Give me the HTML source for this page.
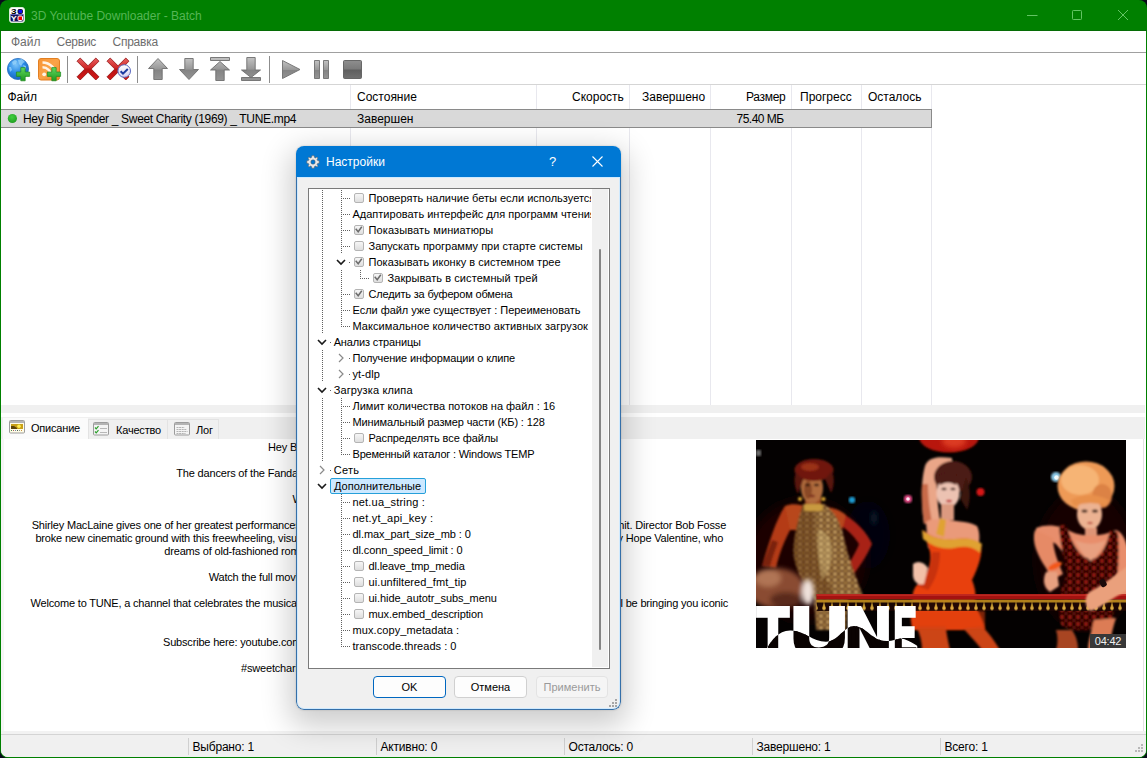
<!DOCTYPE html>
<html lang="ru">
<head>
<meta charset="utf-8">
<title>3D Youtube Downloader - Batch</title>
<style>
*{box-sizing:border-box;margin:0;padding:0}
html,body{width:1147px;height:758px;overflow:hidden;background:#080c1a}
body{font-family:"Liberation Sans",sans-serif;font-size:12px;color:#000;position:relative}
.abs{position:absolute}
#win{position:absolute;left:0;top:0;width:1147px;height:758px;background:#008000;border-radius:8px;overflow:hidden}
#title{position:absolute;left:31px;top:8.5px;font-size:12px;color:#55b655;white-space:nowrap;line-height:15px}
#client{position:absolute;left:1px;top:31px;width:1145px;height:726px;background:#fff;border-radius:0 0 7px 7px;overflow:hidden}
#menubar{position:absolute;left:0;top:0;width:1145px;height:21px;background:#fff}
#menubar span{position:absolute;top:4px;color:#6d6d6d;font-size:12px;line-height:15px;white-space:nowrap}
#menuline{position:absolute;left:0;top:21px;width:1145px;height:1px;background:#a0a0a0}
#toolbar{position:absolute;left:0;top:22px;width:1145px;height:31px;background:#fff}
#toolline{position:absolute;left:0;top:53px;width:1145px;height:1px;background:#d5d5d5}
.tsep{position:absolute;top:3px;width:1px;height:27px;background:#8d8d8d}
#list{position:absolute;left:0;top:54px;width:1145px;height:320px;background:#fff}
.hd{position:absolute;top:0;height:24px;line-height:25px;font-size:12px;white-space:nowrap}
.cdiv{position:absolute;top:0;width:1px;height:320px;background:#e8e8ee}
#row{position:absolute;left:0;top:24px;width:931px;height:19px;background:#d9d9d9;border-top:1px solid #8a8a8a;border-bottom:1px solid #8a8a8a;border-right:1px solid #8a8a8a}
#row span{position:absolute;top:0;line-height:19px;font-size:12px;white-space:nowrap}
#split{position:absolute;left:0;top:374px;width:1144px;height:8px;background:#f0f0f0}
#tabstrip{position:absolute;left:0;top:386px;width:1144px;height:22px;background:#f0f0f0}
.tab{position:absolute;top:2px;height:20px;border:1px solid #e3e3e3;border-bottom:none;background:#f0f0f0;font-size:11px;line-height:18px;white-space:nowrap}
.tab.act{top:0;height:22px;background:#fbfbfb;border-color:#f0f0f0}
.tab span{position:absolute;top:1px;letter-spacing:-0.2px}
#desc{position:absolute;left:0;top:408px;width:1143px;height:292px;background:#fff;border-left:3px solid #f6f6f6;border-right:1px solid #e3e3e3}
#below{position:absolute;left:0;top:700px;width:1145px;height:3px;background:#f2f2f2}
#status{position:absolute;left:0;top:703px;width:1145px;height:23px;background:#f0f0f0;border-top:1px solid #d4d4d4}
#status span{position:absolute;top:5px;font-size:12px;line-height:15px;white-space:nowrap;letter-spacing:-.2px}
#status i{position:absolute;top:3px;width:1px;height:17px;background:#d0d0d0}
#dtext{position:absolute;left:-4px;top:1px;width:760px;height:290px;overflow:hidden}
.dl{position:absolute;font-size:11px;line-height:13px;white-space:nowrap;letter-spacing:-0.18px;color:#000}

#dlg{position:absolute;left:296px;top:146px;width:325px;height:564px;background:#f0f0f0;border-radius:8px;overflow:hidden;box-shadow:0 10px 30px 6px rgba(0,0,0,.20),0 0 2px rgba(0,0,0,.2)}
#dtbg{position:absolute;left:0;top:0;width:325px;height:31px;background:#0078d4}
#dframe{position:absolute;left:0;top:31px;width:325px;height:533px;border:1px solid #356fa8;border-top:none;border-radius:0 0 8px 8px;box-shadow:inset 0 0 0 1px #cfeaff}
#dlgin{position:absolute;left:1px;top:1px;width:323px;height:562px}
#dtitle{position:absolute;left:0;top:0;width:323px;height:30px}
#dtitle span{position:absolute;color:#fff;font-size:12px;line-height:15px;white-space:nowrap}
#tree{position:absolute;left:11px;top:41px;width:302px;height:481px;background:#fff;border:1px solid #7a7a7a}
#treeclip{position:absolute;left:0;top:0;width:282px;height:479px;overflow:hidden}
#sb{position:absolute;left:283px;top:0;width:16px;height:478px;background:#f0f0f0}
#sb i{position:absolute;left:7px;top:60px;width:2px;height:401px;background:#858585;border-radius:1px}
.tt{position:absolute;font-size:11px;line-height:16px;white-space:nowrap;height:16px}
.tt.sel{background:#cce8ff;border:1px solid #26a0da;border-radius:2px;padding:0 0 0 3px;line-height:14px}
.cb{position:absolute;width:10px;height:10px;border:1px solid #b4b4b4;border-radius:2px;background:linear-gradient(#f6f6f6,#dedede)}
.chv{position:absolute}
.btn{position:absolute;top:529px;width:73px;height:22px;border:1px solid #d0d0d0;border-radius:4px;background:#fdfdfd;text-align:center;font-size:11px;line-height:20px}
.btn.def{border:1px solid #0067c0;box-shadow:inset 0 0 0 1px #fdfdfd}
.btn.dis{color:#9a9a9a;border-color:#e3e3e3;background:#f5f5f5}
</style>
</head>
<body>
<div id="win">
  <div id="title">3D Youtube Downloader - Batch</div>
  <svg class="abs" style="left:9px;top:7px" width="16" height="16" viewBox="0 0 16 16">
    <rect x=".5" y=".5" width="15" height="15" rx="2.500" fill="#fff" stroke="#d8ecd8" stroke-width="1"/>
    <path d="M1.500 7.500h13v5.500a1.500 1.500 0 0 1-1.500 1.500h-10a1.500 1.500 0 0 1-1.500-1.500z" fill="#14145a"/>
    <rect x="1.500" y="7" width="13" height="1" fill="#6a6ac0"/>
    <rect x="9" y="2.500" width="4.500" height="4" rx="1" fill="#0a0af0" stroke="#000" stroke-width=".8"/>
    <rect x="9" y="9" width="4.500" height="4.500" rx="1" fill="#f00000" stroke="#fff" stroke-width="1"/>
    <text x="2" y="7.200" font-family="'Liberation Sans',sans-serif" font-weight="bold" font-size="7.500" fill="#000" textLength="5.500" lengthAdjust="spacingAndGlyphs">3</text>
    <text x="1.800" y="14" font-family="'Liberation Sans',sans-serif" font-weight="bold" font-size="7.500" fill="#fff" textLength="6" lengthAdjust="spacingAndGlyphs">Y</text>
  </svg>
  <svg class="abs" style="left:1020px;top:5px" width="120" height="20" viewBox="1020 5 120 20" fill="none" stroke="#63c463" stroke-width="1">
    <path d="M1027 15.500h10.500"/>
    <rect x="1072.500" y="10.500" width="9" height="9" rx=".800"/>
    <path d="M1118 10 1128 20M1128 10 1118 20"/>
  </svg>

  <div class="abs" style="left:0;top:30px;width:1147px;height:1px;background:#066c06"></div>
  <div id="client">
    <div id="menubar"><span style="left:10px">Файл</span><span style="left:55.5px;letter-spacing:-.25px">Сервис</span><span style="left:111.5px;letter-spacing:-.25px">Справка</span></div>
    <div id="menuline"></div>
    <div id="toolbar">
<svg class="abs" style="left:-1px;top:0" width="400" height="31" viewBox="0 53 400 31">
<defs>
<radialGradient id="gl" cx=".4" cy=".3" r=".75"><stop offset="0" stop-color="#7cc4f8"/><stop offset=".5" stop-color="#2a8ae6"/><stop offset="1" stop-color="#1560b8"/></radialGradient>
<linearGradient id="gp" x1="0" y1="0" x2="0" y2="1"><stop offset="0" stop-color="#5fd65f"/><stop offset="1" stop-color="#1e9a1e"/></linearGradient>
<linearGradient id="go" x1="0" y1="0" x2="1" y2="1"><stop offset="0" stop-color="#f79434"/><stop offset=".5" stop-color="#fba348"/><stop offset="1" stop-color="#ef8a26"/></linearGradient>
<linearGradient id="gr" x1="0" y1="0" x2="0" y2="1"><stop offset="0" stop-color="#e86060"/><stop offset=".45" stop-color="#d02828"/><stop offset=".5" stop-color="#b81414"/><stop offset="1" stop-color="#d41818"/></linearGradient>
<linearGradient id="gg" x1="0" y1="0" x2="0" y2="1"><stop offset="0" stop-color="#c2c2c2"/><stop offset=".5" stop-color="#989898"/><stop offset=".55" stop-color="#848484"/><stop offset="1" stop-color="#949494"/></linearGradient>
<linearGradient id="gs" x1="0" y1="0" x2="0" y2="1"><stop offset="0" stop-color="#8e8e8e"/><stop offset=".48" stop-color="#7a7a7a"/><stop offset=".52" stop-color="#5e5e5e"/><stop offset="1" stop-color="#707070"/></linearGradient>
<linearGradient id="gb" x1="0" y1="0" x2="0" y2="1"><stop offset="0" stop-color="#ffffff"/><stop offset="1" stop-color="#d4d0f0"/></linearGradient>
<path id="plus" d="M-2.2-6.6h4.4v4.4h4.4v4.4h-4.4v4.4h-4.4v-4.4h-4.4v-4.4h4.4z"/>
<path id="rx" d="M-11-7.8-7.8-11 0-3.2 7.8-11 11-7.8 3.2 0 11 7.8 7.8 11 0 3.2-7.8 11-11 7.8-3.200 0z"/>
</defs>
<!-- globe -->
<circle cx="18" cy="69" r="10.6" fill="url(#gl)" stroke="#2a6fc0" stroke-width=".8"/>
<path d="M12 62l3-2 2 1-1 3-3 1zM18 60l4-1 3 3-2 1-2 3-2-2zM9 67l2 0 1 3-2 2zM23 65l3 1 0 3-2-1z" fill="#9ad4fa" opacity=".75"/>
<use href="#plus" x="23" y="74.200" fill="url(#gp)" stroke="#1f8a1f" stroke-width=".7"/>
<!-- rss -->
<rect x="38.500" y="58.500" width="21" height="21.500" rx="2.500" fill="url(#go)" stroke="#e27f22" stroke-width="1"/>
<g fill="none" stroke="#fff3e4" stroke-linecap="butt"><path d="M42.500 62.500a13.500 13.500 0 0 1 13.500 13.500" stroke-width="2.600"/><path d="M42.500 67.300a8.700 8.700 0 0 1 8.700 8.700" stroke-width="2.400"/></g>
<circle cx="44.200" cy="74.300" r="1.900" fill="#fff3e4"/>
<use href="#plus" x="54" y="74.200" fill="url(#gp)" stroke="#1f8a1f" stroke-width=".7"/>
<!-- red X -->
<use href="#rx" x="88" y="69" fill="url(#gr)" stroke="#8e1212" stroke-width=".8"/>
<use href="#rx" x="118" y="69" fill="url(#gr)" stroke="#8e1212" stroke-width=".8"/>
<circle cx="124.200" cy="71" r="6.300" fill="url(#gb)" stroke="#5a68c0" stroke-width="1"/>
<path d="M120.600 71.200 123 73.600 127.800 69" fill="none" stroke="#1c3aa0" stroke-width="2"/>
<!-- arrows -->
<g fill="url(#gg)" stroke="#6e6e6e" stroke-width=".9" stroke-linejoin="round">
<path d="M158 58.500 167.500 68.500H162.200V79.500H153.800V68.500H148.500z"/>
<path d="M189 79.500 179.500 69.500H184.800V58.500H193.200V69.500H198.500z"/>
<path d="M210.500 57.500H229.500V60.500H210.500zM220 61.500 229.500 70H224.200V80.500H215.800V70H210.500z"/>
<path d="M251 77.500 241.500 70H246.800V57.500H255.200V70H260.500zM241.500 77.500H260.500V80.500H241.500z"/>
<path d="M282.500 60.500 300 69.500 282.500 78.500z"/>
<path d="M314.500 60.500H319.500V78.500H314.500zM323.500 60.500H328.500V78.500H323.500z"/>
</g>
<rect x="343.500" y="60.500" width="18" height="18" rx="1" fill="url(#gs)" stroke="#5c5c5c" stroke-width=".9"/>
</svg>

      <div class="tsep" style="left:66px"></div>
      <div class="tsep" style="left:136px"></div>
      <div class="tsep" style="left:268px"></div>
    </div>
    <div id="toolline"></div>
    <div id="list">
      <div class="cdiv" style="left:349px"></div>
      <div class="cdiv" style="left:535px"></div>
      <div class="cdiv" style="left:628px"></div>
      <div class="cdiv" style="left:709px"></div>
      <div class="cdiv" style="left:790px"></div>
      <div class="cdiv" style="left:860px"></div>
      <div class="cdiv" style="left:930px"></div>
      <div class="hd" style="left:6.5px">Файл</div>
      <div class="hd" style="left:356px">Состояние</div>
      <div class="hd" style="left:571px">Скорость</div>
      <div class="hd" style="left:641px">Завершено</div>
      <div class="hd" style="left:745px;letter-spacing:-.3px">Размер</div>
      <div class="hd" style="left:799px">Прогресс</div>
      <div class="hd" style="left:867px">Осталось</div>
      <div id="row">
        <svg class="abs" style="left:6px;top:3px" width="11" height="11" viewBox="0 0 11 11"><defs><radialGradient id="gd" cx=".45" cy=".35" r=".7"><stop offset="0" stop-color="#3fd03f"/><stop offset="1" stop-color="#1f9a1f"/></radialGradient></defs><circle cx="5.400" cy="5.500" r="4.600" fill="url(#gd)"/></svg>
        <span style="left:22px;letter-spacing:-0.33px">Hey Big Spender _ Sweet Charity (1969) _ TUNE.mp4</span>
        <span style="left:356px">Завершен</span>
        <span style="left:735.5px;letter-spacing:-.5px">75.40 МБ</span>
      </div>
    </div>
    <div id="split"></div>
    <div id="tabstrip">
      <div class="tab act" style="left:1px;width:87px"><svg class="abs" style="left:6px;top:2px" width="16" height="14" viewBox="0 0 16 14"><rect x=".5" y=".5" width="15" height="12.500" rx="1" fill="#fffce6" stroke="#9c9c9c"/><rect x="1" y="1" width="14" height="2" fill="#b4b4b4"/><rect x="2" y="4" width="12" height="5" fill="#c8a018"/><path d="M2 6l3 0 3 2 0 1-6 0z" fill="#5a4208"/><circle cx="10" cy="6.300" r="1.800" fill="#ffee50"/><g><rect x="2" y="10" width="1" height="1" fill="#4a8a4a"/><rect x="4" y="10" width="1" height="1" fill="#a86060"/><rect x="6" y="10" width="1" height="1" fill="#7088b0"/><rect x="8" y="10" width="1" height="1" fill="#506050"/><rect x="10" y="10" width="1" height="1" fill="#8a9a8a"/><rect x="12" y="10" width="1" height="1" fill="#c89040"/></g></svg><span style="left:28px;top:1px">Описание</span></div>
      <div class="tab" style="left:87px;width:80px"><svg class="abs" style="left:4px;top:2px" width="16" height="14" viewBox="0 0 16 14"><rect x=".5" y=".5" width="15" height="12.500" rx="1" fill="#f4f4f4" stroke="#9c9c9c"/><rect x="1" y="1" width="14" height="2" fill="#b4b4b4"/><path d="M2 5.500l1.200 1.300 2.300-2.600M2 9.500l1.200 1.300 2.300-2.600" fill="none" stroke="#2aa02a" stroke-width="1.200"/><path d="M7 6.500h7M7 10.500h7" stroke="#b8b8b8" stroke-width="1"/></svg><span style="left:27px">Качество</span></div>
      <div class="tab" style="left:166px;width:52px"><svg class="abs" style="left:6px;top:2px" width="16" height="14" viewBox="0 0 16 14"><rect x=".5" y=".5" width="15" height="12.500" rx="1" fill="#f4f4f4" stroke="#9c9c9c"/><rect x="1" y="1" width="14" height="2" fill="#b4b4b4"/><path d="M2.500 5.500h8M2.500 7.500h10M2.500 9.500h11M2.500 11.500h9" stroke="#b4b4b4" stroke-width="1" stroke-dasharray="2 .6"/></svg><span style="left:28px">Лог</span></div>
    </div>
    <div id="desc">
<div id="dtext">
<span class="dl" style="left:268.1px;top:1px">Hey Big Spender | Sweet Charity (1969) | TUNE</span>
<span class="dl" style="left:176.3px;top:27px">The dancers of the Fandango Ballroom perform 'Big Spender' in Bob Fosse's musical.</span>
<span class="dl" style="left:292.5px;top:53px">Watch the full scene now.</span>
<span class="dl" style="left:31.7px;top:79px">Shirley MacLaine gives one of her greatest performances in this adaptation of the</span>
<span class="dl" style="left:35.4px;top:92px">broke new cinematic ground with this freewheeling, visually inventive story of</span>
<span class="dl" style="left:164.3px;top:105px">dreams of old-fashioned romance but keeps getting her heart broken.</span>
<span class="dl" style="left:208.7px;top:131px">Watch the full movie on digital platforms today.</span>
<span class="dl" style="left:30.5px;top:157px">Welcome to TUNE, a channel that celebrates the musicals you love, where</span>
<span class="dl" style="left:309.5px;top:170px">moments from the greatest movie musicals.</span>
<span class="dl" style="left:163.0px;top:196px">Subscribe here: youtube.com/@TUNEmusicals?sub_confirmation=1</span>
<span class="dl" style="left:241.0px;top:222px">#sweetcharity #shirleymaclaine #bobfosse</span>
<span class="dl" style="right:33.9px;top:79px">Broadway hit. Director Bob Fosse</span>
<span class="dl" style="right:36.9px;top:92px">Charity Hope Valentine, who</span>
<span class="dl" style="right:31.9px;top:157px">we'll be bringing you iconic</span>
</div>
</div>
    <svg id="thumb" class="abs" style="left:755px;top:409px" width="370" height="208" viewBox="0 0 370 208">
<defs>
<filter id="b1" x="-10%" y="-10%" width="120%" height="120%"><feGaussianBlur stdDeviation="1"/></filter>
<filter id="b2" x="-30%" y="-30%" width="160%" height="160%"><feGaussianBlur stdDeviation="2.5"/></filter>
<filter id="b4" x="-30%" y="-30%" width="160%" height="160%"><feGaussianBlur stdDeviation="6"/></filter>
<pattern id="coins" width="7" height="6" patternUnits="userSpaceOnUse"><rect width="7" height="6" fill="#76502a"/><circle cx="2" cy="2" r="1.700" fill="#caa466"/><circle cx="5.500" cy="5" r="1.500" fill="#a88044"/></pattern>
<pattern id="seq" width="8" height="7" patternUnits="userSpaceOnUse"><rect width="8" height="7" fill="#1a0504"/><circle cx="2" cy="2" r="1.900" fill="#a42410"/><circle cx="6" cy="5.500" r="1.600" fill="#70140a"/></pattern>
<pattern id="fringe" y="159.500" width="8" height="12" patternUnits="userSpaceOnUse"><rect width="8" height="12" fill="#1a0503"/><rect width="8" height="3" fill="#b8861c"/><path d="M4 2 2.200 9h3.600z" fill="#c89a30"/><circle cx="4" cy="9" r="1.700" fill="#e2b244"/></pattern>
<clipPath id="tc"><rect width="370" height="208"/></clipPath>
<clipPath id="wv"><path d="M11 208C16 200 22 191 34 190.500C48 190 56 201.700 70 201.700C82 201.700 88 186 98 186C110 186 116 201 130 201C140 201 142 197 148 199C154 201 158 204 161.500 206V208z"/></clipPath>
</defs>
<g clip-path="url(#tc)">
<rect width="370" height="208" fill="#040101"/>
<ellipse cx="112" cy="95" rx="22" ry="34" fill="#06060b" filter="url(#b4)"/>
<ellipse cx="50" cy="120" rx="60" ry="60" fill="#1c0604" filter="url(#b4)"/>
<ellipse cx="330" cy="120" rx="50" ry="70" fill="#160403" filter="url(#b4)"/>
<rect x="0" y="10" width="5" height="6" fill="#6a6a6a" filter="url(#b1)"/>
<!-- top red lamp -->
<ellipse cx="193" cy="-3" rx="30" ry="15.500" fill="#b81808" filter="url(#b1)"/>
<ellipse cx="198" cy="1" rx="12" ry="7" fill="#dc3a20" filter="url(#b2)"/>
<!-- lights -->
<circle cx="96" cy="60" r="3.200" fill="#1c9ad0" filter="url(#b1)"/>
<circle cx="152" cy="59" r="4" fill="#e84c88" filter="url(#b1)"/>
<circle cx="152" cy="59" r="1.800" fill="#ffe6f2"/>
<circle cx="224.500" cy="52" r="4" fill="#d81414" filter="url(#b1)"/>
<circle cx="300" cy="37" r="5" fill="#8cc8e6" filter="url(#b1)"/>
<circle cx="300.500" cy="37.500" r="2.300" fill="#f2fcff"/>
<ellipse cx="118" cy="78" rx="3" ry="7" fill="#0a1a2a" filter="url(#b2)"/>
<!-- LEFT dancer -->
<g filter="url(#b1)">
<path d="M29 66C20 80 13 102 6 126L20 128C24 110 32 92 40 80z" fill="#b43a16"/>
<path d="M16 100C12 110 9 118 6 126L14 127C16 118 20 108 22 102z" fill="#7a2410"/>
<path d="M84 72C100 80 112 94 116 104C110 118 102 128 98 134L91 128C96 118 102 108 103 104C98 96 90 88 82 84z" fill="#a82414"/>
<path d="M29 66C38 62 46 66 52 66H66C74 68 82 68 90 75L86 90H34z" fill="#b8461c"/>
<path d="M49 56h16v14h-16z" fill="#9a4a20"/>
<ellipse cx="56" cy="48" rx="11" ry="15.500" fill="#b06c3c"/>
<ellipse cx="52" cy="50" rx="4" ry="9" fill="#8a4a26"/>
<ellipse cx="58" cy="30" rx="19.500" ry="11" fill="#70190e"/>
<ellipse cx="54" cy="27" rx="9" ry="4" fill="#9a3018"/>
<path d="M40 32c-3 8-1 16 2 22l5-14zM76 31c3 8 2 16-1 22l-6-14z" fill="#58120a"/>
<path d="M47 64C42 80 36 100 38 118C42 136 50 150 58 158L60 190H90L92 158H108C102 142 94 124 90 106C86 90 84 76 68 64z" fill="url(#coins)"/>
<path d="M47 64C42 80 36 100 38 118C42 136 50 150 58 158H80C64 130 56 100 60 64z" fill="#5a3010" opacity=".45"/>
<path d="M62 90c8 0 14 10 14 22s-4 22-10 28c-4-16-6-34-4-50z" fill="#e8d090" opacity=".35"/>
<ellipse cx="51.500" cy="45" rx="2.600" ry="1.300" fill="#2a100a"/><ellipse cx="60.500" cy="45" rx="2.600" ry="1.300" fill="#2a100a"/><ellipse cx="56" cy="56" rx="3" ry="1.300" fill="#7a2a1c"/><circle cx="44" cy="59" r="2" fill="#e8b030"/><circle cx="67.500" cy="59" r="2" fill="#e8b030"/>
<rect x="48" y="64" width="19" height="7" rx="2" fill="#c89a40"/>
</g>
<!-- foreground blurry hand bottom-left -->
<g filter="url(#b2)">
<ellipse cx="20" cy="148" rx="28" ry="20" fill="#8a4c32"/>
<ellipse cx="12" cy="138" rx="13" ry="9" fill="#b07454"/>
<ellipse cx="30" cy="160" rx="16" ry="8" fill="#5a2c1c"/>
<ellipse cx="52" cy="152" rx="6" ry="13" fill="#f0e2dc"/>
</g>
<!-- MIDDLE dancer -->
<g filter="url(#b1)">
<path d="M168 84C165 64 165 40 169 26C172 18 180 16 196 18L196 25C188 25 182 27 181 33C180 50 182 66 184 80z" fill="#eaa688"/>
<path d="M168 84C166 70 165 56 166 44L172 44C172 58 174 72 176 82z" fill="#c86a4a"/>
<ellipse cx="197" cy="37" rx="19" ry="16" fill="#4c1a12"/>
<path d="M210 38c5 10 5 22 1 32l-7-12z" fill="#3a120c"/>
<ellipse cx="192" cy="53" rx="11.500" ry="15" fill="#ecc2b2"/>
<path d="M182 36q9-7 20 0l-2 9q-8-5-16 0z" fill="#4c1a12"/>
<ellipse cx="188" cy="49" rx="2.600" ry="1.200" fill="#3a1a14"/><ellipse cx="197" cy="49" rx="2.600" ry="1.200" fill="#3a1a14"/><ellipse cx="193" cy="61" rx="3" ry="1.300" fill="#c02828"/>
<path d="M185 64h13v16h-13z" fill="#dc9a80"/>
<path d="M170 82C178 76 184 82 190 79C198 82 210 80 221 86C224 92 224 100 222 108H172z" fill="#ea9a7a"/>
<path d="M167 90C176 98 186 100 198 99C210 98 218 98 225 104C227 114 222 128 216 140C220 150 220 156 219 166C224 174 228 182 229 190H157C154 182 154 172 157 164C156 158 156 152 160 146C170 138 176 126 174 112z" fill="#e8400e"/>
<path d="M176 112C176 126 172 138 162 146L172 150C180 140 184 126 184 112z" fill="#c8300a"/>
<path d="M166 90C176 98 186 100 198 99C210 98 218 98 226 104L224 113C216 106 208 106 198 108C186 110 176 106 167 99z" fill="#e0a232"/>
<path d="M184 78L180 94L188 97L190 80z" fill="#e0a232"/>
<path d="M157 124C162 120 168 122 172 128L168 144C162 146 158 142 157 136z" fill="#f2c0a8"/>
<path d="M160 186C164 194 166 202 166 210H194C192 200 190 192 190 186zM207 188C214 196 222 204 226 210H244C238 200 232 192 226 186z" fill="#cc4418"/>
</g>
<!-- RIGHT dancer -->
<g filter="url(#b1)">
<ellipse cx="330" cy="46" rx="28.500" ry="24.500" fill="#ee9a56"/>
<ellipse cx="324" cy="40" rx="19" ry="15" fill="#f6b474"/>
<ellipse cx="346" cy="56" rx="10" ry="12" fill="#dc8244"/>
<ellipse cx="333.500" cy="74" rx="12.500" ry="16" fill="#ecb292"/>
<path d="M315 60q18-10 38 0l-3 6q-15-6-32 0z" fill="#e8904c"/>
<ellipse cx="328.500" cy="71" rx="3" ry="1.500" fill="#3a2018"/><ellipse cx="339" cy="71" rx="3" ry="1.500" fill="#3a2018"/><ellipse cx="334" cy="83" rx="2.800" ry="1.200" fill="#c05a48"/><path d="M329 88h12v14h-12z" fill="#de9476"/>
<path d="M280 88C292 83 306 86 316 92C326 97 346 97 360 90C366 92 370 100 372 110V160H356L352 120L310 116L300 104C294 100 286 97 280 97z" fill="#e88e6c"/>
<path d="M279 90C275 102 282 116 290 128L296 140L307 134C302 122 297 110 297 98z" fill="#e68a66"/>
<path d="M303 86L311 84C314 100 322 116 335 121C347 116 352 102 354 90L362 92C364 120 361 150 357 178C350 190 320 194 306 186C300 172 304 150 311 134C307 118 304 100 303 86z" fill="url(#seq)"/>
<path d="M319 100C325 112 330 118 335 121C341 116 346 108 350 100C340 105 330 105 319 100z" fill="#e8a080"/>
<ellipse cx="299" cy="126" rx="7.500" ry="3" fill="#f2581c" transform="rotate(-25 299 126)"/>
<path d="M290 132c-4 8-2 16 4 20l9-6-2-14z" fill="#e8a080"/>
<path d="M338 180C336 190 332 200 332 210H354C354 198 357 188 360 178z" fill="#dc7c54"/>
<path d="M300 190c2 6 2 14 0 20h22c0-8-2-14-6-20z" fill="#a84424"/>
</g>
<!-- rail -->
<rect x="60.500" y="154.300" width="310" height="5.200" fill="#a41210"/>
<rect x="60.500" y="154.300" width="310" height="1.500" fill="#c42c24"/>
<rect x="60.500" y="159.500" width="310" height="11.500" fill="url(#fringe)" opacity=".95"/>
<path d="M157 171h72l0 18h-72z" fill="#e0400e" opacity=".55" filter="url(#b1)"/>
<!-- forearm over rail (right dancer) -->
<path d="M372 126C360 134 346 146 335 151C328 155 328 166 334 171C344 169 352 160 372 150z" fill="#eaa07c" filter="url(#b1)"/>
<rect x="344" y="139" width="6" height="8" rx="2" fill="#1a0a0a" transform="rotate(-30 347 143)"/>
<!-- TUNE logo -->
<g font-family="'Liberation Sans',sans-serif" font-weight="bold" font-size="70" fill="#fff" stroke="#fff" stroke-width="4" stroke-linejoin="miter">
<text x=".900" y="217.200" textLength="31.900" lengthAdjust="spacingAndGlyphs">T</text>
<text x="34.900" y="217.200" textLength="56.500" lengthAdjust="spacingAndGlyphs">U</text>
<text x="89.140" y="217.200" textLength="46.130" lengthAdjust="spacingAndGlyphs">N</text>
<text x="137.460" y="217.200" textLength="23.200" lengthAdjust="spacingAndGlyphs">E</text>
</g>
<g clip-path="url(#wv)">
<rect x="0" y="180" width="161.500" height="30" fill="#fff"/>
<g font-family="'Liberation Sans',sans-serif" font-weight="bold" font-size="70" fill="#0a0302" stroke="#0a0302" stroke-width="4" stroke-linejoin="miter">
<text x=".900" y="217.200" textLength="31.900" lengthAdjust="spacingAndGlyphs">T</text>
<text x="34.900" y="217.200" textLength="56.500" lengthAdjust="spacingAndGlyphs">U</text>
<text x="89.140" y="217.200" textLength="46.130" lengthAdjust="spacingAndGlyphs">N</text>
<text x="137.460" y="217.200" textLength="23.200" lengthAdjust="spacingAndGlyphs">E</text>
</g>
</g>
<!-- time badge -->
<rect x="334" y="194" width="36" height="14" fill="#383838"/>
<text x="352" y="205" text-anchor="middle" font-family="'Liberation Sans',sans-serif" font-size="11" fill="#f0f0f0" letter-spacing="-.2">04:42</text>
</g>
</svg>
<div id="below"></div>
    <div id="status">
      <i style="left:187px"></i><span style="left:191.5px">Выбрано: 1</span>
      <i style="left:375px"></i><span style="left:379.5px">Активно: 0</span>
      <i style="left:563px"></i><span style="left:567.5px">Осталось: 0</span>
      <i style="left:751px"></i><span style="left:755.5px">Завершено: 1</span>
      <i style="left:939px"></i><span style="left:943.5px">Всего: 1</span><svg class="abs" style="left:1131px;top:9px" width="12" height="12" shape-rendering="crispEdges"><path fill="#b8b8b8" d="M9 0h2v2h-2zM6 3h2v2h-2zM9 3h2v2h-2zM3 6h2v2h-2zM6 6h2v2h-2zM9 6h2v2h-2z"/></svg>
    </div>
  </div>
</div>
<div id="dlg"><div id="dtbg"></div><div id="dframe"></div><div id="dlgin">
  <div id="dtitle">
    <svg class="abs" style="left:9px;top:8px" width="14" height="14" viewBox="0 0 14 14"><g fill="#e8e8e8" stroke="#555" stroke-width=".5"><path d="M7 .6 8.2 .8 8.5 2.4 9.6 2.9 10.9 2 11.9 3 11.1 4.4 11.6 5.5 13.2 5.8 13.2 8.2 11.6 8.5 11.1 9.6 12 10.9 11 11.9 9.6 11.1 8.5 11.6 8.2 13.2 5.8 13.2 5.5 11.6 4.4 11.1 3.1 12 2.1 11 2.9 9.6 2.4 8.5 .8 8.2 .8 5.8 2.4 5.5 2.9 4.4 2 3.1 3 2.1 4.4 2.9 5.5 2.4 5.8 .8Z"/><circle cx="7" cy="7" r="2.2" fill="#0078d4"/></g></svg>
    <span style="left:29px;top:8px">Настройки</span>
    <span style="left:252px;top:7px;font-size:13px">?</span>
    <svg class="abs" style="left:295px;top:9px" width="11" height="11" viewBox="0 0 11 11"><path d="M.5 .5 10.5 10.5M10.5 .5 .5 10.5" stroke="#fff" stroke-width="1.1" fill="none"/></svg>
  </div>
  <div id="tree">
    <div id="treeclip">
<svg class="abs" style="left:0;top:0" width="283" height="479" shape-rendering="crispEdges"><path fill="none" stroke="#606060" stroke-width="1" stroke-dasharray="1 1" d="M13.5 1V145M13.5 161V193M13.5 209V273M32.5 1V64M32.5 81V138M51.5 81V90M32.5 209V266M32.5 305V458M34 9.5H42M34 25.5H42M34 41.5H42M34 57.5H42M34 105.5H42M34 121.5H42M34 137.5H42M34 217.5H42M34 233.5H42M34 249.5H42M34 265.5H42M34 313.5H42M34 329.5H42M34 345.5H42M34 361.5H42M34 377.5H42M34 393.5H42M34 409.5H42M34 425.5H42M34 441.5H42M34 457.5H42M53 89.5H61M40 73.5h1M21 153.5h1M40 169.5h1M40 185.5h1M21 201.5h1M21 281.5h1"/></svg>

<i class="cb" style="left:45px;top:4px"></i>
<span class="tt" style="left:59.5px;top:1px">Проверять наличие беты если используется yt-dlp</span>
<span class="tt" style="left:43.5px;top:17px">Адаптировать интерфейс для программ чтения с экрана</span>
<i class="cb on" style="left:45px;top:36px"><svg class="abs" style="left:0;top:0" width="8" height="8" viewBox="0 0 8 8"><path d="M.7 2.800 3.200 5.800 6.800 .800" fill="none" stroke="#6c6c6c" stroke-width="1.500"/></svg></i>
<span class="tt" style="left:59.5px;top:33px;letter-spacing:0.116px">Показывать миниатюры</span>
<i class="cb" style="left:45px;top:52px"></i>
<span class="tt" style="left:59.5px;top:49px;letter-spacing:0.003px">Запускать программу при старте системы</span>
<i class="cb on" style="left:45px;top:68px"><svg class="abs" style="left:0;top:0" width="8" height="8" viewBox="0 0 8 8"><path d="M.7 2.800 3.200 5.800 6.800 .800" fill="none" stroke="#6c6c6c" stroke-width="1.500"/></svg></i>
<span class="tt" style="left:59.5px;top:65px;letter-spacing:0.030px">Показывать иконку в системном трее</span>
<svg class="chv" style="left:26.600000000000023px;top:69px" width="10" height="8" viewBox="0 0 10 8"><path d="M1 2 L5 6 L9 2" fill="none" stroke="#1a1a1a" stroke-width="1.6"/></svg>
<i class="cb on" style="left:64px;top:84px"><svg class="abs" style="left:0;top:0" width="8" height="8" viewBox="0 0 8 8"><path d="M.7 2.800 3.200 5.800 6.800 .800" fill="none" stroke="#6c6c6c" stroke-width="1.500"/></svg></i>
<span class="tt" style="left:78.5px;top:81px;letter-spacing:0.072px">Закрывать в системный трей</span>
<i class="cb on" style="left:45px;top:100px"><svg class="abs" style="left:0;top:0" width="8" height="8" viewBox="0 0 8 8"><path d="M.7 2.800 3.200 5.800 6.800 .800" fill="none" stroke="#6c6c6c" stroke-width="1.500"/></svg></i>
<span class="tt" style="left:59.5px;top:97px;letter-spacing:-0.175px">Следить за буфером обмена</span>
<span class="tt" style="left:43.5px;top:113px;letter-spacing:-0.038px">Если файл уже существует : Переименовать</span>
<span class="tt" style="left:43.5px;top:129px;letter-spacing:0.06px">Максимальное количество активных загрузок<span style="margin-left:2px"> : 5</span></span>
<span class="tt" style="left:24.7px;top:145px;letter-spacing:-0.150px">Анализ страницы</span>
<svg class="chv" style="left:7.5px;top:149px" width="10" height="8" viewBox="0 0 10 8"><path d="M1 2 L5 6 L9 2" fill="none" stroke="#1a1a1a" stroke-width="1.6"/></svg>
<span class="tt" style="left:43.5px;top:161px;letter-spacing:-0.144px">Получение информации о клипе</span>
<svg class="chv" style="left:27.600000000000023px;top:164px" width="8" height="10" viewBox="0 0 8 10"><path d="M2 1 L6 5 L2 9" fill="none" stroke="#8a8a8a" stroke-width="1.2"/></svg>
<span class="tt" style="left:43.5px;top:177px;letter-spacing:0.100px">yt-dlp</span>
<svg class="chv" style="left:27.600000000000023px;top:180px" width="8" height="10" viewBox="0 0 8 10"><path d="M2 1 L6 5 L2 9" fill="none" stroke="#8a8a8a" stroke-width="1.2"/></svg>
<span class="tt" style="left:24.7px;top:193px;letter-spacing:0.131px">Загрузка клипа</span>
<svg class="chv" style="left:7.5px;top:197px" width="10" height="8" viewBox="0 0 10 8"><path d="M1 2 L5 6 L9 2" fill="none" stroke="#1a1a1a" stroke-width="1.6"/></svg>
<span class="tt" style="left:43.5px;top:209px;letter-spacing:-0.011px">Лимит количества потоков на файл : 16</span>
<span class="tt" style="left:43.5px;top:225px;letter-spacing:-0.126px">Минимальный размер части (КБ) : 128</span>
<i class="cb" style="left:45px;top:244px"></i>
<span class="tt" style="left:59.5px;top:241px;letter-spacing:-0.062px">Распределять все файлы</span>
<span class="tt" style="left:43.5px;top:257px;letter-spacing:-0.206px">Временный каталог : Windows TEMP</span>
<span class="tt" style="left:24.7px;top:273px;letter-spacing:0.267px">Сеть</span>
<svg class="chv" style="left:8.5px;top:276px" width="8" height="10" viewBox="0 0 8 10"><path d="M2 1 L6 5 L2 9" fill="none" stroke="#8a8a8a" stroke-width="1.2"/></svg>
<span class="tt sel" style="left:21px;top:289px;width:96px">Дополнительные</span>
<svg class="chv" style="left:7.5px;top:293px" width="10" height="8" viewBox="0 0 10 8"><path d="M1 2 L5 6 L9 2" fill="none" stroke="#1a1a1a" stroke-width="1.6"/></svg>
<span class="tt" style="left:43.5px;top:305px;letter-spacing:0.193px">net.ua_string :</span>
<span class="tt" style="left:43.5px;top:321px;letter-spacing:0.227px">net.yt_api_key :</span>
<span class="tt" style="left:43.5px;top:337px;letter-spacing:-0.064px">dl.max_part_size_mb : 0</span>
<span class="tt" style="left:43.5px;top:353px;letter-spacing:-0.109px">dl.conn_speed_limit : 0</span>
<i class="cb" style="left:45px;top:372px"></i>
<span class="tt" style="left:59.5px;top:369px;letter-spacing:-0.129px">dl.leave_tmp_media</span>
<i class="cb" style="left:45px;top:388px"></i>
<span class="tt" style="left:59.5px;top:385px;letter-spacing:0.090px">ui.unfiltered_fmt_tip</span>
<i class="cb" style="left:45px;top:404px"></i>
<span class="tt" style="left:59.5px;top:401px;letter-spacing:-0.052px">ui.hide_autotr_subs_menu</span>
<i class="cb" style="left:45px;top:420px"></i>
<span class="tt" style="left:59.5px;top:417px;letter-spacing:-0.110px">mux.embed_description</span>
<span class="tt" style="left:43.5px;top:433px;letter-spacing:0.083px">mux.copy_metadata :</span>
<span class="tt" style="left:43.5px;top:449px;letter-spacing:0.030px">transcode.threads : 0</span>

    </div>
    <div id="sb"><i></i></div>
  </div>
  <div class="btn def" style="left:76px">OK</div>
  <div class="btn" style="left:157px">Отмена</div>
  <div class="btn dis" style="left:239px;width:72px">Применить</div>
  <svg class="abs" style="left:312px;top:552px" width="9" height="9" shape-rendering="crispEdges"><path fill="#a6a6a6" d="M6 0h2v2h-2zM3 3h2v2h-2zM6 3h2v2h-2zM0 6h2v2h-2zM3 6h2v2h-2zM6 6h2v2h-2z"/></svg>
</div></div>
</body>
</html>
